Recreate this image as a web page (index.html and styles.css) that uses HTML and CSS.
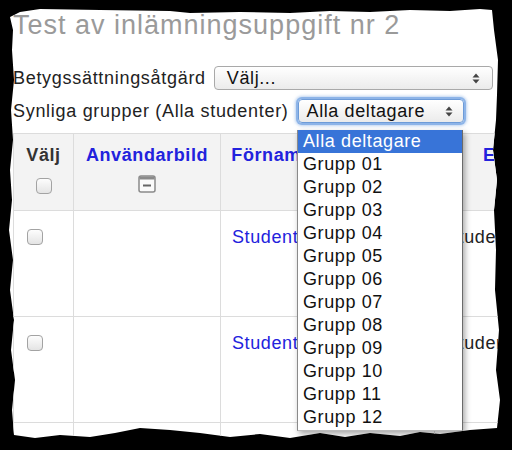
FILE: index.html
```html
<!DOCTYPE html>
<html lang="sv">
<head>
    <meta charset="UTF-8">
    <title>Test av inlämningsuppgift nr 2</title>
    <link rel="stylesheet" href="styles.css">
</head>
<body>
<div class="paper">
    <h2 class="title">Test av inlämningsuppgift nr 2</h2>

    <div class="field">
        <label>Betygssättningsåtgärd</label>
        <div class="select wide">
            <span>Välj...</span>
            <svg class="arrows" width="8" height="11" viewBox="0 0 8 11"><path d="M4 0.5L7.5 4.5H0.5Z M4 10.5L7.5 6.5H0.5Z" fill="#444"/></svg>
        </div>
    </div>

    <div class="field">
        <label>Synliga grupper (Alla studenter)</label>
        <div class="select focus">
            <span>Alla deltagare</span>
            <svg class="arrows" width="8" height="11" viewBox="0 0 8 11"><path d="M4 0.5L7.5 4.5H0.5Z M4 10.5L7.5 6.5H0.5Z" fill="#444"/></svg>
        </div>
    </div>

    <!-- öppen lista för gruppväljaren -->
    <ul class="dropdown">
        <li class="current">Alla deltagare</li>
        <li>Grupp 01</li>
        <li>Grupp 02</li>
        <li>Grupp 03</li>
        <li>Grupp 04</li>
        <li>Grupp 05</li>
        <li>Grupp 06</li>
        <li>Grupp 07</li>
        <li>Grupp 08</li>
        <li>Grupp 09</li>
        <li>Grupp 10</li>
        <li>Grupp 11</li>
        <li>Grupp 12</li>
    </ul>

    <table class="grading">
        <colgroup>
            <col class="c1"><col class="c2"><col class="c3"><col class="c4">
        </colgroup>
        <tr class="head">
            <th>Välj<span class="check"></span></th>
            <th><a href="#">Användarbild</a>
                <svg class="hide" width="18" height="18" viewBox="0 0 18 18">
                    <rect x="1" y="1" width="16" height="16" rx="2" fill="#fafafa" stroke="#8a8a8a" stroke-width="1.5"/>
                    <rect x="1.5" y="1.5" width="15" height="3" fill="#8a8a8a"/>
                    <rect x="5" y="9.5" width="8" height="2" fill="#666"/>
                </svg>
            </th>
            <th><a href="#">Förnamn / Efternamn</a></th>
            <th><a href="#">E-postadress</a></th>
        </tr>
        <tr class="row">
            <td class="sel"><span class="check"></span></td>
            <td></td>
            <td><a href="#">Student 01</a></td>
            <td>Student01@exempel.se</td>
        </tr>
        <tr class="row">
            <td class="sel"><span class="check"></span></td>
            <td></td>
            <td><a href="#">Student 02</a></td>
            <td>Student02@exempel.se</td>
        </tr>
        <tr class="row">
            <td class="sel"><span class="check"></span></td>
            <td></td>
            <td><a href="#">Student 03</a></td>
            <td>Student03@exempel.se</td>
        </tr>
    </table>
</div>
</body>
</html>
```

FILE: styles.css
```css
* {
    padding: 0;
    margin: 0;
    list-style: none;
    box-sizing: border-box;
}

body {
    background: #000;
    font-family: "Liberation Sans", Arial, sans-serif;
    font-size: 18px;
    letter-spacing: 0.6px;
    color: #222;
}

.paper {
    width: 512px;
    height: 450px;
    padding: 8px 0 0 13px;
    background: #fff;
    position: relative;
    overflow: hidden;
    clip-path: polygon(10px 17px, 20px 12px, 40px 9px, 100px 10px, 170px 11px, 190px 13px, 240px 12px, 290px 13px, 330px 11px, 370px 12px, 410px 10px, 450px 11px, 480px 9px, 492px 10px,
        494px 30px, 498px 60px, 497px 95px, 496px 120px, 493px 150px, 497px 180px, 494px 210px, 496px 250px, 495px 290px, 499px 330px, 496px 370px, 500px 400px, 497px 428px,
        470px 430px, 440px 434px, 420px 432px, 400px 436px, 370px 433px, 345px 437px, 320px 433px, 290px 438px, 260px 434px, 230px 437px, 200px 433px, 170px 430px, 140px 428px, 115px 433px, 90px 437px, 60px 435px, 35px 438px, 14px 435px,
        12px 410px, 15px 380px, 11px 350px, 14px 320px, 10px 290px, 13px 260px, 9px 230px, 12px 200px, 10px 170px, 13px 140px, 11px 110px, 14px 80px, 12px 50px, 13px 30px);
}

.title {
    font-size: 27px;
    letter-spacing: 1px;
    font-weight: normal;
    line-height: 34px;
    color: #9a9a9a;
    margin-bottom: 24px;
}

.field {
    display: flex;
    align-items: center;
    gap: 8px;
    height: 24px;
    margin-bottom: 9px;
}

.field label {
    line-height: 22px;
    letter-spacing: 0.7px;
    white-space: nowrap;
}

.select {
    height: 24px;
    display: flex;
    align-items: center;
    justify-content: space-between;
    border: 1px solid #a9a9a9;
    border-radius: 4px;
    background: linear-gradient(#fff, #ebebeb);
    color: #111;
    line-height: 22px;
}

.select.wide {
    width: 279px;
    padding: 0 12px 0 12px;
}

.select.focus {
    width: 166px;
    margin-left: 1px;
    padding: 0 10px 0 8px;
    border-color: #6d9bd8;
    box-shadow: 0 0 0 2px #8db4e8, 0 0 3px 3px rgba(120, 165, 225, 0.5);
}

.arrows {
    flex: none;
}

.dropdown {
    position: absolute;
    left: 297px;
    top: 130px;
    width: 166px;
    padding-bottom: 1px;
    background: #fff;
    border-left: 1px solid #8a8a8a;
    border-right: 1px solid #6a6a6a;
    border-bottom: 1px solid #bbb;
    box-shadow: 2px 3px 6px rgba(0, 0, 0, 0.35);
    z-index: 2;
}

.dropdown li {
    height: 23px;
    line-height: 23px;
    padding-left: 5px;
    color: #111;
}

.dropdown li.current {
    background: #3874d8;
    color: #fff;
}

.grading {
    margin-top: 10px;
    border-collapse: collapse;
    table-layout: fixed;
    width: 639px;
}

.c1 { width: 60px; }
.c2 { width: 147px; }
.c3 { width: 214px; }
.c4 { width: 218px; }

.grading th,
.grading td {
    border: 1px solid #dcdcdc;
    vertical-align: top;
    line-height: 22px;
    white-space: nowrap;
    overflow: hidden;
}

.grading a {
    color: #2222dd;
    text-decoration: none;
}

.head th {
    height: 77px;
    background: #f3f3f3;
    padding-top: 10px;
    text-align: center;
    font-weight: bold;
    color: #333;
}

.head .check {
    display: block;
    margin: 12px auto 0;
}

.hide {
    display: block;
    margin: 9px auto 0;
}

.row td {
    height: 106px;
    padding: 15px 11px;
}

.row td.sel {
    padding-left: 13px;
}

.row .check {
    margin-top: 3px;
}

.check {
    display: block;
    width: 16px;
    height: 16px;
    border: 1px solid #a3a3a3;
    border-radius: 4px;
    background: linear-gradient(#fdfdfd, #e4e4e4);
}
```
